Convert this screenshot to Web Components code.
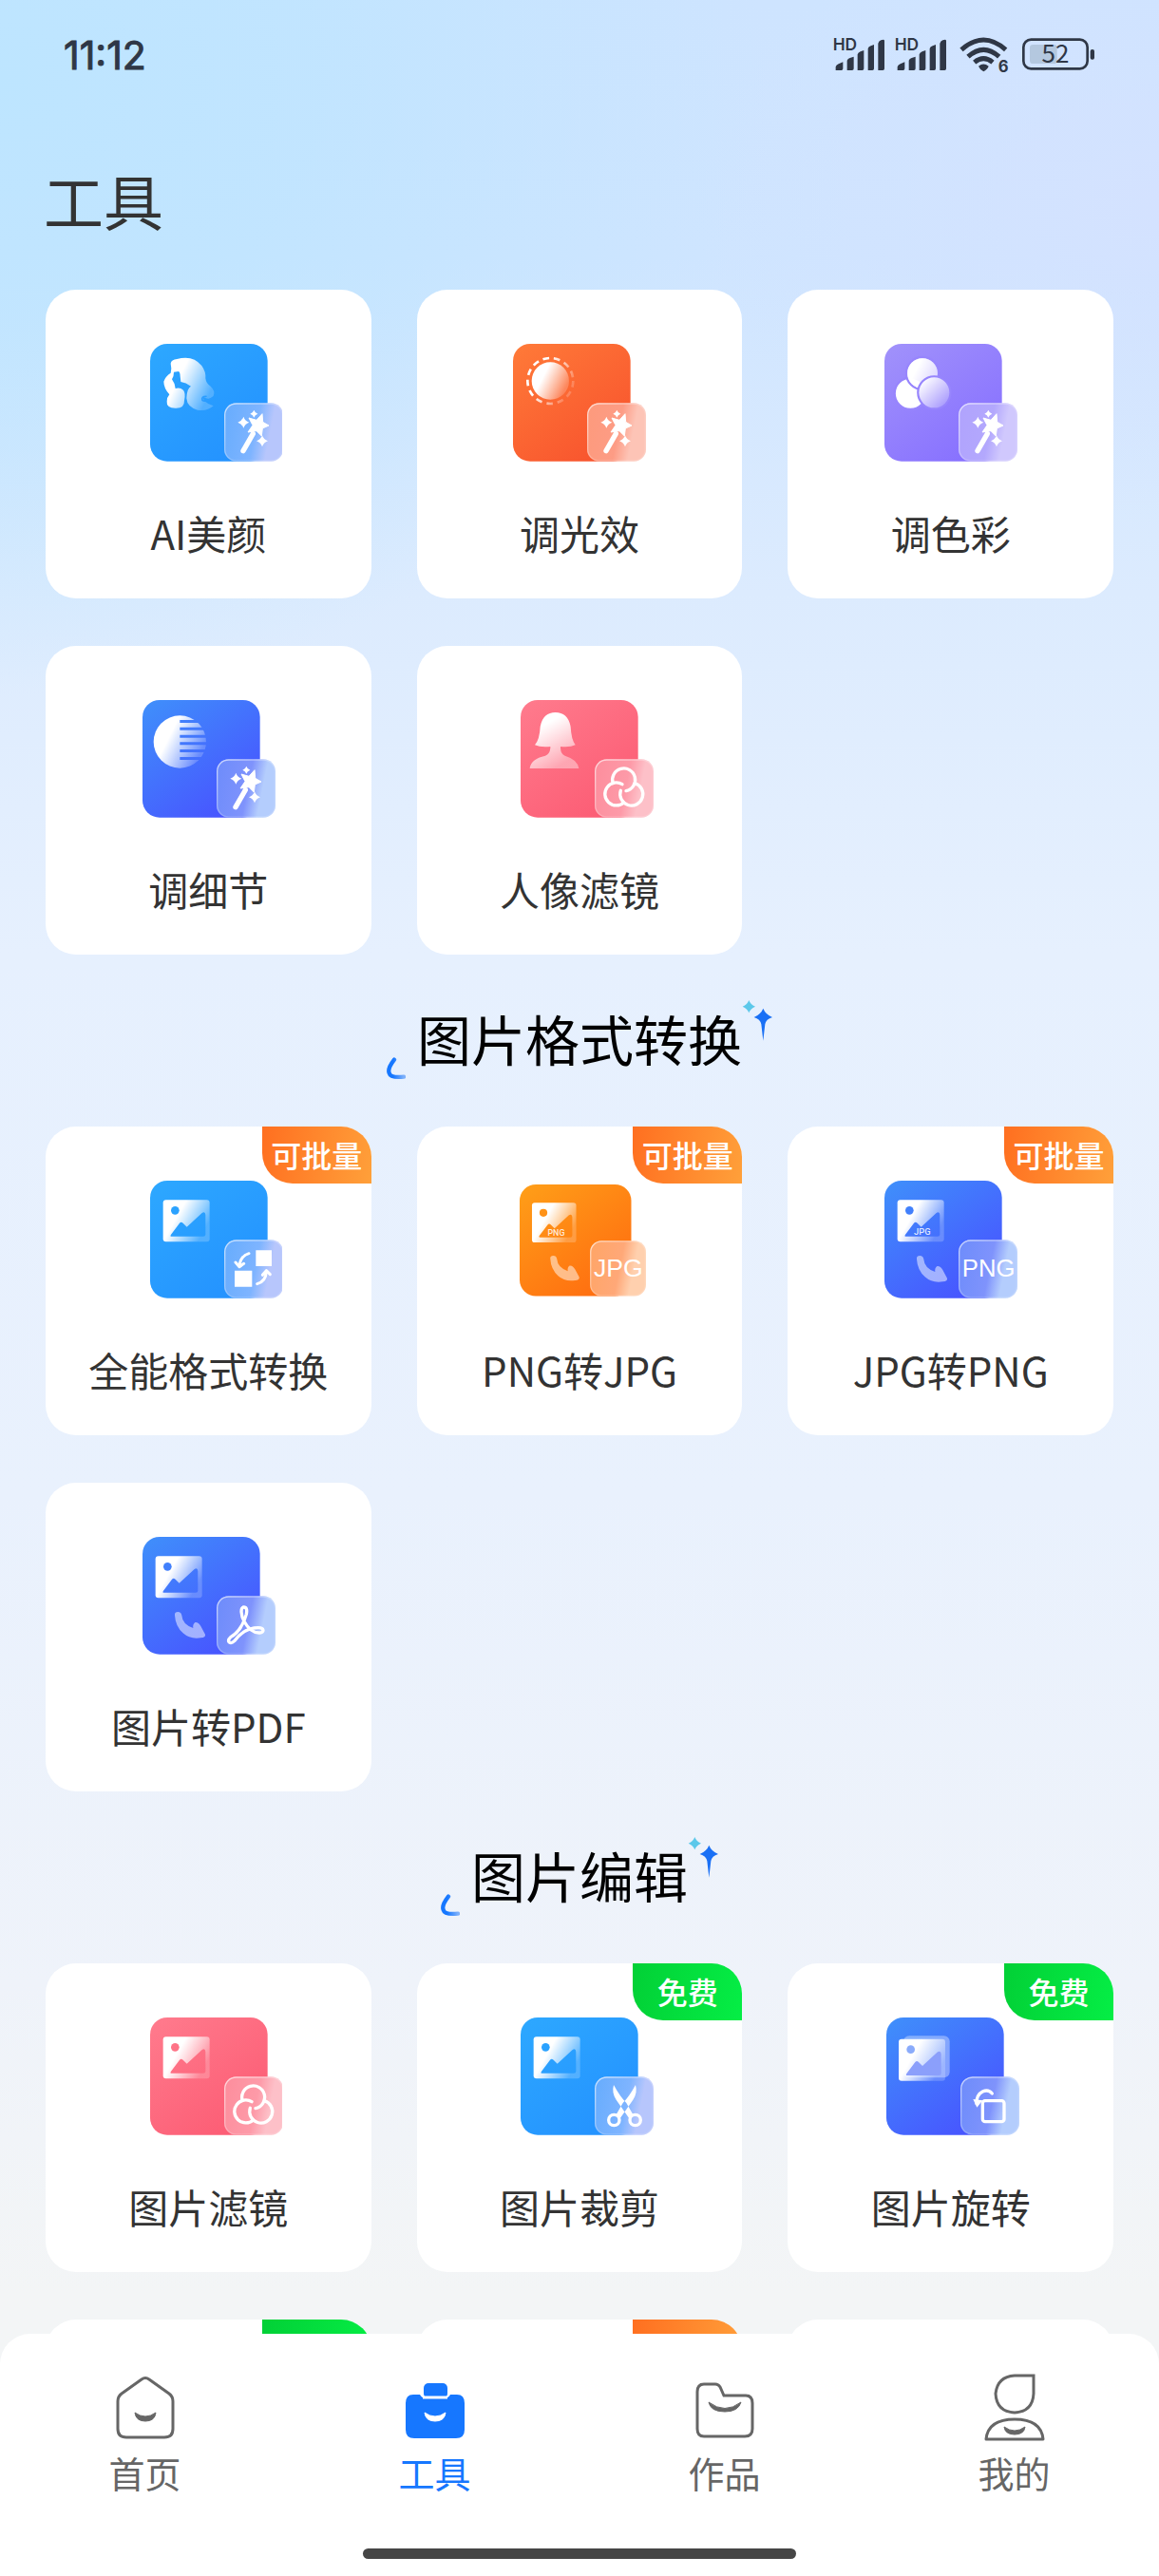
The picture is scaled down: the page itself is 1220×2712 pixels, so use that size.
<!DOCTYPE html>
<html lang="zh-CN">
<head>
<meta charset="utf-8">
<meta name="viewport" content="width=device-width, initial-scale=1">
<title>工具</title>
<style>
  html, body { margin: 0; height: 100%; }
  body { font-family: "Noto Sans CJK SC", sans-serif; color: #333; }
</style>
</head>
<body>
<app-shell>
  <status-bar slot="status" time="11:12" battery="52"></status-bar>
  <page-title>工具</page-title>
  <tool-grid>
    <tool-card icon="face">AI美颜</tool-card>
    <tool-card icon="light">调光效</tool-card>
    <tool-card icon="color">调色彩</tool-card>
    <tool-card icon="detail">调细节</tool-card>
    <tool-card icon="portrait">人像滤镜</tool-card>
  </tool-grid>
  <section-title>图片格式转换</section-title>
  <tool-grid>
    <tool-card icon="convert" badge="可批量">全能格式转换</tool-card>
    <tool-card icon="png2jpg" badge="可批量">PNG转JPG</tool-card>
    <tool-card icon="jpg2png" badge="可批量">JPG转PNG</tool-card>
    <tool-card icon="pdf">图片转PDF</tool-card>
  </tool-grid>
  <section-title>图片编辑</section-title>
  <tool-grid>
    <tool-card icon="filter">图片滤镜</tool-card>
    <tool-card icon="crop" badge="免费" tone="free">图片裁剪</tool-card>
    <tool-card icon="rotate" badge="免费" tone="free">图片旋转</tool-card>
    <tool-card badge="免费" tone="free"></tool-card>
    <tool-card badge="可批量"></tool-card>
    <tool-card></tool-card>
  </tool-grid>
  <tab-bar slot="tabs">
    <tab-item icon="home">首页</tab-item>
    <tab-item icon="tools" active>工具</tab-item>
    <tab-item icon="works">作品</tab-item>
    <tab-item icon="me">我的</tab-item>
  </tab-bar>
</app-shell>

<script>
const define = (name, render) => customElements.define(name, class extends HTMLElement {
  connectedCallback() {
    if (this.shadowRoot) return;
    const t = document.createElement('template');
    t.innerHTML = render(this);
    this.attachShadow({ mode: 'open' }).append(t.content.cloneNode(true));
  }
});

define('app-shell', () => `
<style>
  :host { display: flex; flex-direction: column; height: 100vh; overflow: hidden;
    background:
      radial-gradient(ellipse 66% 24% at 0% 3%, #bde5ff 0%, #bde5ffc0 40%, #bde5ff00 100%),
      radial-gradient(ellipse 40% 12% at 100% 8%, #d4e2ff 0%, #d4e2ff00 100%),
      linear-gradient(#cee4ff 0%, #cfe5ff 10%, #dcebfe 23%, #e6f0fe 37%, #e9f1fd 58%, #eff3fa 77%, #f3f5f6 89%, #f3f5f6 100%); }
  main { flex: 1; min-height: 0; overflow: auto; scrollbar-width: none; padding: 0 48px; }
  main::-webkit-scrollbar { display: none; }
</style>
<slot name="status"></slot>
<main><slot></slot></main>
<slot name="tabs"></slot>`);

define('status-bar', el => `
<style>
  :host { display: flex; align-items: center; justify-content: space-between; height: 116px; padding: 0 67px;
    color: #2f3746; font-family: Inter, sans-serif; }
  time { font-size: 41px; line-height: 48px; font-weight: 400; -webkit-text-stroke: 1px currentColor; }
  svg { display: block; width: 276px; height: 42px; }
</style>
<time>${el.getAttribute('time')}</time>
<svg viewBox="114 52 828 126" fill="currentColor" font-family="Inter, sans-serif">
  <g id="sig">
    <text x="113" y="99" font-size="52" font-weight="600">HD</text>
    <path d="M122 163V152Q124 146 131 143L145 137V158Q145 163 140 163ZM158 163V132Q160 126 167 124L179 120V158Q179 163 174 163ZM191 163V113Q193 107 200 104L211 100V158Q211 163 206 163ZM224 163V94Q226 88 233 86L243 82V158Q243 163 238 163ZM256 163V78Q258 70 265 68Q276 64 276 70V158Q276 163 271 163Z"/>
  </g>
  <use href="#sig" x="195"/>
  <g fill="none" stroke="currentColor" stroke-width="15">
    <path d="M519 98Q589 36 659 98"/><path d="M540 120Q589 76 638 120"/><path d="M560 138Q589 114 618 138"/>
  </g>
  <path d="M573 150Q589 137 605 150Q603 158 589 167Q576 159 573 150Z"/>
  <text x="635" y="170" font-size="50" font-weight="700">6</text>
  <rect x="735" y="82" width="86" height="60" rx="10" fill="#b4c8df"/>
  <rect x="715" y="66" width="202" height="92" rx="24" fill="none" stroke="currentColor" stroke-width="8"/>
  <rect x="926" y="97" width="13" height="32" rx="6"/>
  <text x="816" y="140" font-size="78" font-weight="400" text-anchor="middle" font-family="Noto Sans CJK SC, sans-serif">${el.getAttribute('battery')}</text>
</svg>`);

define('page-title', () => `
<style>
  :host { display: block; }
  h1 { margin: 0; padding: 46px 0 47px; font-size: 63px; line-height: 96px; font-weight: 400; text-indent: -2px; }
</style>
<h1><slot></slot></h1>`);

define('section-title', () => `
<style>
  :host { display: flex; justify-content: center; height: 84px; padding: 48px 0 49px; }
  h2 { margin: 0 0 0 12px; font-size: 57px; line-height: 78px; font-weight: 400; color: #000; }
  .arc { align-self: flex-end; width: 20px; height: 24px; }
  .stars { align-self: flex-start; width: 32px; height: 44px; }
</style>
<svg class="arc" viewBox="0 0 60 72">
  <defs><linearGradient id="a"><stop offset=".3" stop-color="#1677ff"/><stop offset="1" stop-color="#7db0fa"/></linearGradient></defs>
  <path d="M24 8Q2 36 8 50Q12 66 54 62" fill="none" stroke="url(#a)" stroke-width="13" stroke-linecap="round"/>
</svg>
<h2><slot></slot></h2>
<svg class="stars" viewBox="0 0 96 132">
  <path d="M22 0Q27 14 42 20Q27 26 22 40Q17 26 2 20Q17 14 22 0Z" fill="#5cc8ea"/>
  <path d="M67 26Q74 44 96 54Q76 60 73 76L67 128L61 76Q58 60 38 54Q60 44 67 26Z" fill="#1a70f5"/>
</svg>`);

define('tool-grid', () => `
<style>
  :host { display: grid; grid-template-columns: repeat(3, minmax(0, 1fr)); gap: 50px 48px; }
</style>
<slot></slot>`);

define('tool-card', el => {
  const badge = el.getAttribute('badge');
  return `
<style>
  :host { display: block; }
  button { position: relative; box-sizing: border-box; width: 100%; min-height: 325px; margin: 0; border: 0;
    padding: 57px 8px 39px; border-radius: 32px; background: #fff; color: inherit; font: inherit;
    display: flex; flex-direction: column; align-items: center; gap: 45px; }
  .label { font-size: 42px; line-height: 60px; white-space: nowrap; }
  .badge { position: absolute; top: 0; right: 0; width: 115px; height: 60px; border-radius: 0 32px 0 32px;
    font-size: 32px; line-height: 58px; font-weight: 500; text-align: center; color: #fff;
    background: linear-gradient(100deg, #ff6f20, #ffa03a); }
  :host([tone="free"]) .badge { background: linear-gradient(100deg, #02d036, #05ee45); }
</style>
<button type="button">
  <tool-icon name="${el.getAttribute('icon') || ''}"></tool-icon>
  <span class="label"><slot></slot></span>
  ${badge ? `<span class="badge">${badge}</span>` : ''}
</button>`;
});

// Tile palettes: [tile start, tile end, chip left, chip middle, chip right]
const tones = {
  sky:    ['#2da8ff', '#2492ff', '#66acfd', '#7eb4ff', '#b7c6fc'],
  orange: ['#ff7a38', '#f8542e', '#fd9a7c', '#fd9c85', '#fdc4b6'],
  purple: ['#a192fb', '#8770ff', '#b0a3fd', '#b3a8fd', '#d0c8fd'],
  royal:  ['#3f90fb', '#4853ff', '#6d8cfb', '#7f93fc', '#b4cdfd'],
  pink:   ['#ff7b8d', '#fc5c74', '#fd8d9c', '#fd9aa8', '#fdc0c8'],
  amber:  ['#ff9f18', '#ff6d10', '#ffa566', '#ffa878', '#ffd0ae']
};
const spark = (x, y, r) => `<path d="M${x} ${y - r}Q${x + r / 4} ${y - r / 4} ${x + r} ${y}Q${x + r / 4} ${y + r / 4} ${x} ${y + r}Q${x - r / 4} ${y + r / 4} ${x - r} ${y}Q${x - r / 4} ${y - r / 4} ${x} ${y - r}Z"/>`;
const wand = `<g transform="translate(-55 -66)" fill="#fff">
  <path d="M349 404L380 350" stroke="#fff" stroke-width="16" stroke-linecap="round"/>
  <path d="M430 324L410 333L407 357L391 341L364 345L379 323L367 300L391 307L409 287L411 313Z" stroke="#fff" stroke-width="3" stroke-linejoin="round"/>
  ${spark(350, 314, 18)}${spark(383, 287, 12)}${spark(409, 373, 18)}</g>`;
const rings = `<g fill="none" stroke="#fff" stroke-width="10" stroke-linecap="round">
  <path d="M291.6 262.6A36 36 0 1 1 333 287"/><path d="M326 324A36 36 0 1 1 321 266"/><path d="M360.4 262.6A36 36 0 1 1 316 286"/></g>`;
const picture = (note = '') => `<g>
  <rect x="41" y="61" width="147" height="132" rx="9" fill="url(#fade)"/>
  <circle cx="79" cy="94" r="13" fill="url(#tile)"/>
  <path d="M68 176Q62 176 66 170L93 134Q98 128 104 134L116 146L164 102Q174 96 175 108V170Q175 176 168 176Z" fill="url(#tile)"/>
  ${note ? `<text x="93" y="172" font-size="28" font-weight="500" fill="#fff" fill-opacity=".85" font-family="Roboto, sans-serif">${note}</text>` : ''}</g>`;
const bend = `<g fill="#fff" opacity=".5"><path d="M102 248Q100 238 112 237Q122 237 124 248Q126 276 160 288Q158 276 166 270Q176 268 184 282L198 308Q200 318 184 319Q150 324 128 304Q104 282 102 248Z"/></g>`;

const icons = {
  face: ['sky', 17, `<path transform="translate(-55 -66)" fill="url(#fade)" d="M120 128Q122 116 140 114Q190 100 218 135Q232 155 230 175Q232 192 246 200Q262 215 255 230Q246 244 228 236Q218 232 226 246Q236 256 255 262Q235 280 205 275Q172 266 170 238Q172 205 184 200Q168 188 152 186L150 168Q150 156 145 153L130 155Q130 170 124 178Q133 190 135 207Q150 203 160 212Q168 222 163 245Q164 270 135 269Q106 268 108 248Q108 235 116 226Q98 205 98 185Q104 168 120 158Q124 145 120 128Z"/>
    <path transform="translate(-55 -66)" d="M252 236Q230 252 220 244Q216 232 232 232" fill="none" stroke="#2b9cff" stroke-width="5" stroke-linecap="round"/>${wand}`],
  light: ['orange', 8, `<circle cx="118" cy="117" r="59" fill="url(#fade)"/><circle cx="118" cy="117" r="72" fill="none" stroke="url(#fade)" stroke-width="8" stroke-dasharray="20 14.8"/>${wand}`],
  color: ['purple', 8, `<g stroke="#9785fd" stroke-width="7"><circle cx="82" cy="157" r="50" fill="#fff"/><circle cx="120" cy="93" r="51" fill="url(#fade)"/><circle cx="120" cy="93" r="48" stroke="none" fill="#fff" opacity=".6"/><circle cx="157" cy="154" r="51" fill="#9280fd"/><circle cx="157" cy="154" r="48" stroke="none" fill="url(#soft)"/></g>${wand}`],
  detail: ['royal', 9, `<mask id="bars"><rect width="370" height="370" fill="#fff"/><path d="M118 63h90v9h-90zM118 86h90v9h-90zM118 110h90v9h-90zM118 133h90v9h-90zM118 156h90v9h-90zM118 180h90v9h-90z" fill="#000"/></mask><circle cx="118" cy="132" r="83" fill="url(#fade)" mask="url(#bars)"/>${wand}`],
  portrait: ['pink', 16, `<path fill="url(#down)" d="M110 39Q70 39 62 85Q60 125 45 142Q62 150 94 147V152Q92 170 78 176Q32 186 29 216H184Q180 188 140 176Q127 170 126 152V147Q156 150 173 142Q160 125 158 85Q150 39 110 39Z"/>${rings}`],
  convert: ['sky', 17, `${picture()}<g fill="#fff"><path d="M334 220h50v50h-50zM267 284h55v51h-55z"/></g><g fill="none" stroke="#fff" stroke-width="9" stroke-linecap="round" stroke-linejoin="round"><path d="M312 230Q285 238 282 270M270 258L282 272L296 262"/><path d="M338 326Q366 318 367 286M355 298L367 284L379 296"/></g>`],
  png2jpg: ['amber', 15, `${picture('PNG')}${bend}<text x="328" y="306" font-size="84" fill="#fff" text-anchor="middle" font-family="Liberation Sans, sans-serif">JPG</text>`, .95],
  jpg2png: ['royal', 8, `${picture('JPG')}${bend}<text x="329" y="303" font-size="77" fill="#fff" text-anchor="middle" font-family="Liberation Sans, sans-serif">PNG</text>`],
  pdf: ['royal', 9, `${picture()}${bend}<path transform="translate(-60 -51)" fill="none" stroke="#fff" stroke-width="10" d="M380 273C368 273 371 300 381 318C392 338 410 355 430 354C446 352 444 338 426 338C400 338 372 350 350 380C338 392 323 382 338 368C365 352 380 325 388 295C391 280 388 273 380 273Z"/>`],
  filter: ['pink', 17, `${picture()}${rings}`],
  crop: ['sky', 16, `${picture()}<g fill="none" stroke="#fff" stroke-width="10"><circle cx="295" cy="324" r="17"/><circle cx="362" cy="324" r="17"/></g><path fill="#fff" d="M294 213Q287 238 302 260L344 320L356 308L334 270Q314 250 294 213ZM363 213Q370 238 355 260L313 320L301 308L323 270Q343 250 363 213Z"/>`],
  rotate: ['royal', 10, `<rect x="54" y="58" width="146" height="132" rx="18" fill="#fff" opacity=".35"/><g><rect x="39" y="68" width="147" height="132" rx="9" fill="url(#fade)"/><circle cx="77" cy="101" r="13" fill="#8aabfb"/><path d="M66 183Q60 183 64 177L91 141Q96 135 102 141L114 153L162 109Q172 103 173 115V177Q173 183 166 183Z" fill="#8b9ffb"/></g><rect x="304" y="263" width="68" height="66" rx="8" fill="none" stroke="#fff" stroke-width="10"/><path d="M334 240Q322 226 304 234Q284 244 285 272" fill="none" stroke="#fff" stroke-width="10" stroke-linecap="round"/><path d="M274 258L304 262L286 284Z" fill="#fff"/>`]
};

define('tool-icon', el => {
  const style = `<style>:host { display: block; width: 156px; height: 124px; } svg { display: block; width: 100%; height: 100%; }</style>`;
  const icon = icons[el.getAttribute('name')];
  if (!icon) return style;
  const [tone, inset, art, scale = 1] = icon;
  const c = tones[tone];
  return `${style}
<svg viewBox="0 0 468 372">
  <defs>
    <linearGradient id="tile" gradientUnits="userSpaceOnUse" x1="0" y1="0" x2="280" y2="370"><stop stop-color="${c[0]}"/><stop offset="1" stop-color="${c[1]}"/></linearGradient>
    <linearGradient id="chip" x2="1" y2=".2"><stop stop-color="${c[2]}"/><stop offset=".6" stop-color="${c[3]}"/><stop offset=".85" stop-color="${c[4]}"/><stop offset="1" stop-color="${c[4]}"/></linearGradient>
    <linearGradient id="fade" x2="1" y2=".5"><stop offset=".4" stop-color="#fff"/><stop offset="1" stop-color="#fff" stop-opacity=".2"/></linearGradient>
    <linearGradient id="soft" x2="1" y2="1"><stop offset=".1" stop-color="#fff"/><stop offset="1" stop-color="#fff" stop-opacity=".1"/></linearGradient>
    <linearGradient id="down" x2=".5" y2="1"><stop offset=".3" stop-color="#fff"/><stop offset="1" stop-color="#fff" stop-opacity=".4"/></linearGradient>
    <linearGradient id="edge" x2="1" y2="1"><stop stop-color="#fff" stop-opacity=".65"/><stop offset=".6" stop-color="#fff" stop-opacity=".15"/></linearGradient>
  </defs>
  <g transform="translate(${inset * 3} ${scale < 1 ? 12 : 0}) scale(${scale})">
    <rect width="371" height="371" rx="54" fill="url(#tile)"/>
    <rect x="234" y="187" width="186" height="184" rx="38" fill="url(#chip)"/>
    <rect x="236" y="189" width="182" height="180" rx="36" fill="none" stroke="url(#edge)" stroke-width="4"/>
    ${art}
  </g>
</svg>`;
});

define('tab-bar', () => `
<style>
  :host { display: block; background: #fff; border-radius: 32px 32px 0 0; padding: 42px 0 18px; }
  nav { display: grid; grid-template-columns: repeat(4, 1fr); }
  .grip { width: 456px; max-width: 60%; height: 11px; margin: 54px auto 0; border-radius: 6px; background: #464646; }
</style>
<nav><slot></slot></nav>
<div class="grip"></div>`);

const smile = 'M21 41Q32 49 43 41Q42 50 32 50Q22 50 21 41Z';
const tabs = {
  home: `<path d="M3 29Q3 24 7 21L28 6Q32 3 36 6L57 21Q61 24 61 29V58Q61 67 52 67H12Q3 67 3 58Z" fill="none" stroke="currentColor" stroke-width="3"/><path d="${smile}" fill="currentColor" stroke="currentColor" stroke-linejoin="round"/>`,
  tools: `<rect x="20" y="10" width="25" height="16" rx="5" fill="currentColor"/><path d="M9 22H16Q18 26 23 26H41Q46 26 48 22H55Q63 22 63 31V59Q63 68 54 68H10Q1 68 1 59V31Q1 22 9 22Z" fill="currentColor"/><path d="M19 25H45" stroke="#fff" stroke-width="3"/><path d="${smile}" fill="#fff" stroke="#fff" stroke-linejoin="round"/>`,
  works: `<path d="M10 11H22Q25 11 27 14L31 23H54Q61 23 61 31V58Q61 66 53 66H10Q3 66 3 58V19Q3 11 10 11Z" fill="none" stroke="currentColor" stroke-width="3"/><path d="M15 30Q32 43 49 30Q46 40 32 40Q17 40 15 30Z" fill="currentColor" stroke="currentColor" stroke-linejoin="round"/>`,
  me: `<path d="M52 2V21Q51 40 32 41Q13 40 12 21Q14 3 32 2Z" fill="none" stroke="currentColor" stroke-width="3"/><path d="M2 69Q4 48 32 48Q60 48 62 69Z" fill="none" stroke="currentColor" stroke-width="3" stroke-linejoin="round"/><path d="M21 56Q32 64 43 56Q42 64 32 64Q22 64 21 56Z" fill="currentColor" stroke="currentColor" stroke-linejoin="round"/>`
};
define('tab-item', el => `
<style>
  :host { display: block; color: #666; }
  :host([active]) { color: #1677ff; }
  a { display: flex; flex-direction: column; align-items: center; gap: 6px; color: inherit; text-decoration: none; font-size: 38px; line-height: 52px; }
  svg { display: block; width: 64px; height: 72px; }
</style>
<a href="#${el.getAttribute('icon')}"><svg viewBox="0 0 64 72">${tabs[el.getAttribute('icon')]}</svg><slot></slot></a>`);
</script>
</body>
</html>
